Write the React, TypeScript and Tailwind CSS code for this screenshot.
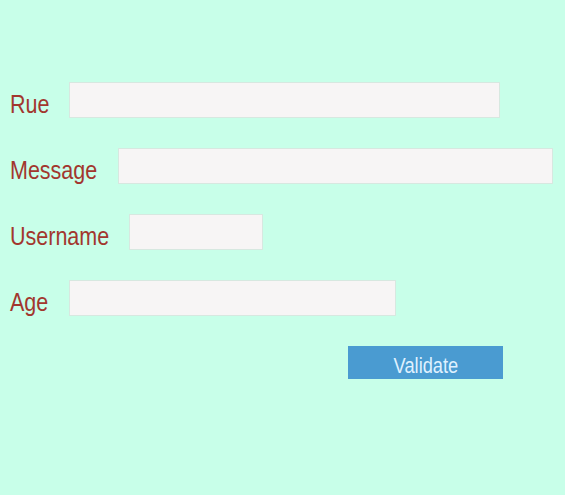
import React from 'react';

// label boxes are fixed width: the reference font is condensed, so the text is squeezed with scale-x
const fields = [
    { label: 'Rue', labelWidth: 'w-[59px]', width: 'w-[431px]' },
    { label: 'Message', labelWidth: 'w-[108px]', width: 'w-[435px]' },
    { label: 'Username', labelWidth: 'w-[119px]', width: 'w-[134px]' },
    { label: 'Age', labelWidth: 'w-[59px]', width: 'w-[327px]' },
];

export default function App() {
    return (
        <div
            className="w-[565px] h-[495px] bg-[#c8ffe9] pl-[10px] pt-[82px]"
            style={{ fontFamily: '"Liberation Sans", Arial, sans-serif' }}
        >
            <form onSubmit={(e) => e.preventDefault()}>
                {fields.map((field) => (
                    <div key={field.label} className="flex items-center h-[36px] mb-[30px]">
                        <label className={`${field.labelWidth} shrink-0 whitespace-nowrap`}>
                            <span className="inline-block text-[25px] leading-none text-[#a2372e] origin-left scale-x-[0.86] translate-y-[6px]">
                                {field.label}
                            </span>
                        </label>
                        <input
                            type="text"
                            className={`${field.width} h-[36px] bg-[#f7f5f5] border border-[#d7e8e0] outline-none`}
                        />
                    </div>
                ))}
                <div className="flex">
                    <button
                        type="submit"
                        className="ml-[338px] w-[155px] h-[33px] bg-[#4a9bd1] text-[#dff1ff] flex justify-center items-center"
                    >
                        <span className="inline-block text-[22px] leading-none scale-x-[0.83] translate-y-[3px]">Validate</span>
                    </button>
                </div>
            </form>
        </div>
    );
}
